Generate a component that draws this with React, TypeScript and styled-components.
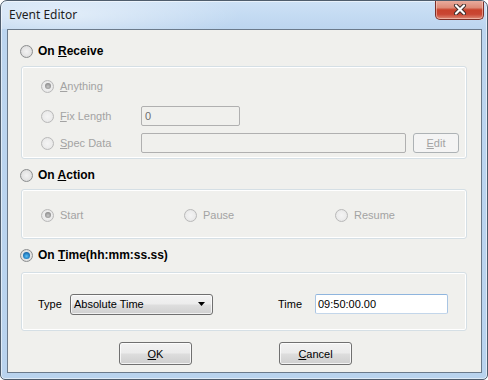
import React from "react";
import styled, { createGlobalStyle } from "styled-components";

const Global = createGlobalStyle`
  html, body { margin: 0; padding: 0; background: #ffffff; }
  * { box-sizing: border-box; }
`;

const Window = styled.div`
  width: 488px;
  height: 380px;
  border: 1px solid #4f5d6d;
  border-radius: 7px 7px 5px 5px;
  background: linear-gradient(to bottom, #cde1f6 0px, #bcd5ef 28px, #b9d3ee 100%);
  box-shadow: inset 0 0 0 1px rgba(255, 255, 255, 0.55);
  display: flex;
  flex-direction: column;
  overflow: hidden;
  font-family: "Liberation Sans", Arial, sans-serif;
`;

const TitleBar = styled.div`
  height: 28px;
  display: flex;
  align-items: flex-start;
  padding-left: 8px;
  background: radial-gradient(ellipse 180px 30px at 60px 14px, rgba(255, 255, 255, 0.5), rgba(255, 255, 255, 0) 100%);
`;

const Title = styled.span`
  font-family: "Noto Sans", "Open Sans", sans-serif;
  font-size: 12px;
  line-height: 16px;
  padding-top: 6px;
  color: #1e1e1e;
`;

const CloseButton = styled.div`
  margin-left: auto;
  margin-right: 3px;
  margin-top: -1px;
  width: 49px;
  height: 20px;
  border: 1px solid #7d2f27;
  border-top: none;
  border-radius: 0 0 5px 5px;
  background: linear-gradient(to bottom, #eab0a2 0%, #dd8b78 40%, #c8422c 52%, #c94633 75%, #de8a76 100%);
  box-shadow: inset 0 0 0 1px rgba(255, 220, 210, 0.5);
  display: flex;
  align-items: center;
  justify-content: center;
`;

const Client = styled.div`
  flex: 1;
  margin: 0 5px 6px 6px;
  border: 1px solid #6b7a8b;
  background: #f0f0ed;
  display: flex;
  flex-direction: column;
  padding: 11px 14px 0 12px;
`;

const Header = styled.div<{ $mt?: number }>`
  height: 20px;
  display: flex;
  align-items: center;
  gap: 5px;
  margin-top: ${(p) => p.$mt ?? 0}px;
`;

const HeaderLabel = styled.span`
  font-size: 12px;
  font-weight: bold;
  color: #000;
  line-height: 14px;
`;

const Group = styled.div<{ $mt: number; $pad: string }>`
  margin-top: ${(p) => p.$mt}px;
  margin-left: 1px;
  border: 1px solid #d5dfe5;
  border-radius: 3px;
  box-shadow: inset 0 0 0 1px #ffffff;
  padding: ${(p) => p.$pad};
  display: flex;
  flex-direction: column;
`;

const Row = styled.div<{ $mt?: number }>`
  height: 20px;
  display: flex;
  align-items: center;
  margin-top: ${(p) => p.$mt ?? 0}px;
`;

const ActionRow = styled.div`
  height: 20px;
  display: grid;
  grid-template-columns: 143px 151px 1fr;
  align-items: center;
`;

const Option = styled.label<{ $w?: number }>`
  display: flex;
  align-items: center;
  gap: 6px;
  width: ${(p) => (p.$w ? `${p.$w}px` : "auto")};
  flex-shrink: 0;
`;

const Radio = styled.span<{ $checked?: boolean; $disabled?: boolean; $blue?: boolean }>`
  width: 13px;
  height: 13px;
  border-radius: 50%;
  flex-shrink: 0;
  border: 1px solid ${(p) => (p.$disabled ? "#b9b9b9" : "#8c8e8f")};
  background: ${(p) =>
    p.$disabled
      ? "radial-gradient(circle at 50% 50%, #f4f4f4 0%, #ececec 55%, #dcdcdc 100%)"
      : "radial-gradient(circle at 50% 50%, #f2f2f2 0%, #e4e4e4 55%, #cdcdcd 100%)"};
  display: flex;
  align-items: center;
  justify-content: center;
  &::after {
    content: "";
    display: ${(p) => (p.$checked ? "block" : "none")};
    width: ${(p) => (p.$blue ? 7 : 6)}px;
    height: ${(p) => (p.$blue ? 7 : 6)}px;
    border-radius: 50%;
    background: ${(p) =>
      p.$blue
        ? "radial-gradient(circle at 50% 60%, #5ec2f5 0%, #2a86c8 45%, #0d4a87 100%)"
        : "radial-gradient(circle at 50% 60%, #c6c6c6 0%, #9a9a9a 55%, #777 100%)"};
  }
`;

const Text = styled.span<{ $disabled?: boolean }>`
  font-size: 11px;
  line-height: 13px;
  color: ${(p) => (p.$disabled ? "#a3a3a3" : "#000")};
`;

const U = styled.span`
  text-decoration: underline;
  text-underline-offset: 1px;
`;

const DisabledInput = styled.div<{ $w: number }>`
  width: ${(p) => p.$w}px;
  height: 20px;
  border: 1px solid #b0b0b0;
  border-radius: 2px;
  background: #f0f0ed;
  font-size: 11px;
  color: #6d6d6d;
  padding: 3px 0 0 3px;
  line-height: 13px;
`;

const DisabledButton = styled.div`
  margin-left: 7px;
  width: 46px;
  height: 20px;
  border: 1px solid #adb2b5;
  border-radius: 3px;
  background: #f4f4f4;
  display: flex;
  align-items: center;
  justify-content: center;
  font-size: 11px;
  color: #a3a3a3;
`;

const TimeRow = styled.div`
  height: 20px;
  display: flex;
  align-items: center;
`;

const FieldLabel = styled.span<{ $w: number; $ml?: number }>`
  width: ${(p) => p.$w}px;
  margin-left: ${(p) => p.$ml ?? 0}px;
  font-size: 11px;
  color: #000;
  flex-shrink: 0;
`;

const Combo = styled.div`
  width: 143px;
  height: 21px;
  border: 1px solid #707070;
  border-radius: 3px;
  background: linear-gradient(to bottom, #f3f3f3 0%, #ececec 48%, #dedede 52%, #d0d0d0 100%);
  box-shadow: inset 0 0 0 1px rgba(255, 255, 255, 0.7);
  display: flex;
  align-items: center;
  padding: 0 6px 0 3px;
  font-size: 11px;
  color: #000;
  justify-content: space-between;
`;

const TextBox = styled.div`
  width: 133px;
  height: 20px;
  border: 1px solid #abadb3;
  border-top-color: #8fb5de;
  border-left-color: #a9c5e3;
  border-right-color: #a9c5e3;
  border-bottom-color: #c3d6ea;
  border-radius: 2px;
  background: #ffffff;
  font-size: 11px;
  color: #000;
  padding: 3px 0 0 2px;
  line-height: 13px;
`;

const ButtonRow = styled.div`
  margin-top: 11px;
  padding-left: 99px;
  display: flex;
  gap: 87px;
`;

const PushButton = styled.div`
  width: 73px;
  height: 23px;
  border: 1px solid #707070;
  border-radius: 3px;
  background: linear-gradient(to bottom, #f2f2f2 0%, #ebebeb 48%, #dddddd 52%, #cfcfcf 100%);
  box-shadow: inset 0 0 0 1px rgba(255, 255, 255, 0.75);
  display: flex;
  align-items: center;
  justify-content: center;
  font-size: 11px;
  color: #000;
`;

export default function App() {
  return (
    <>
      <Global />
      <Window>
        <TitleBar>
          <Title>Event Editor</Title>
          <CloseButton>
            <svg width="14" height="11" viewBox="0 0 14 11">
              <path d="M3 1.5 L11 9.5 M11 1.5 L3 9.5" stroke="#3a2a28" strokeWidth="4" strokeLinecap="round" />
              <path d="M3 1.5 L11 9.5 M11 1.5 L3 9.5" stroke="#ffffff" strokeWidth="2.2" strokeLinecap="round" />
            </svg>
          </CloseButton>
        </TitleBar>
        <Client>
          <Header>
            <Radio />
            <HeaderLabel>
              On <U>R</U>eceive
            </HeaderLabel>
          </Header>
          <Group $mt={5} $pad="9px 7px 5px 19px">
            <Row>
              <Option>
                <Radio $checked $disabled />
                <Text $disabled>
                  <U>A</U>nything
                </Text>
              </Option>
            </Row>
            <Row $mt={10}>
              <Option $w={100}>
                <Radio $disabled />
                <Text $disabled>
                  <U>F</U>ix Length
                </Text>
              </Option>
              <DisabledInput $w={99}>0</DisabledInput>
            </Row>
            <Row $mt={7}>
              <Option $w={100}>
                <Radio $disabled />
                <Text $disabled>
                  <U>S</U>pec Data
                </Text>
              </Option>
              <DisabledInput $w={265} />
              <DisabledButton>
                <span>
                  <U>E</U>dit
                </span>
              </DisabledButton>
            </Row>
          </Group>

          <Header $mt={6}>
            <Radio />
            <HeaderLabel>
              On <U>A</U>ction
            </HeaderLabel>
          </Header>
          <Group $mt={4} $pad="15px 0 13px 19px">
            <ActionRow>
              <Option>
                <Radio $checked $disabled />
                <Text $disabled>Start</Text>
              </Option>
              <Option>
                <Radio $disabled />
                <Text $disabled>Pause</Text>
              </Option>
              <Option>
                <Radio $disabled />
                <Text $disabled>Resume</Text>
              </Option>
            </ActionRow>
          </Group>

          <Header $mt={6}>
            <Radio $checked $blue />
            <HeaderLabel>
              On <U>T</U>ime(hh:mm:ss.ss)
            </HeaderLabel>
          </Header>
          <Group $mt={7} $pad="21px 0 16px 16px">
            <TimeRow>
              <FieldLabel $w={32}>Type</FieldLabel>
              <Combo>
                <span>Absolute Time</span>
                <svg width="8" height="5" viewBox="0 0 8 5">
                  <path d="M0 0 H7 L3.5 4 Z" fill="#000" />
                </svg>
              </Combo>
              <FieldLabel $w={37} $ml={65}>
                Time
              </FieldLabel>
              <TextBox>09:50:00.00</TextBox>
            </TimeRow>
          </Group>

          <ButtonRow>
            <PushButton>
              <span>
                <U>O</U>K
              </span>
            </PushButton>
            <PushButton>
              <span>
                <U>C</U>ancel
              </span>
            </PushButton>
          </ButtonRow>
        </Client>
      </Window>
    </>
  );
}
